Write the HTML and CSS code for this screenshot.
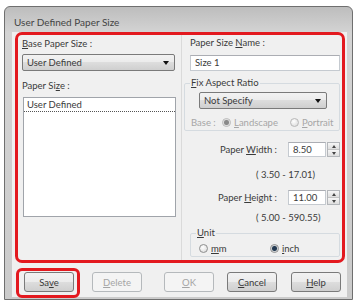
FILE: index.html
```html
<!DOCTYPE html>
<html>
  <head>
    <meta charset="utf-8">
    <link rel="stylesheet" href="styles.css">
  </head>
  <body>
    <div class="window">
      <div class="titlebar">User Defined Paper Size</div>
      <div class="client">
        <div class="panel">
          <div class="col-left">
            <div class="label base-label"><u>B</u>ase Paper Size :</div>
            <div class="combo combo-base"><span>User Defined</span><i class="arrow"></i></div>
            <div class="label size-label">Paper Si<u>z</u>e :</div>
            <div class="listbox">
              <div class="item">User Defined</div>
            </div>
          </div>
          <div class="col-right">
            <div class="label name-label">Paper Size <u>N</u>ame :</div>
            <div class="textbox">Size 1</div>
            <fieldset class="group aspect">
              <legend><u>F</u>ix Aspect Ratio</legend>
              <div class="combo combo-aspect"><span>Not Specify</span><i class="arrow"></i></div>
              <div class="radio-row base-row">
                <span class="base-text">Base :</span>
                <span class="radio checked disabled"></span>
                <span class="rtext landscape"><u>L</u>andscape</span>
                <span class="radio disabled"></span>
                <span class="rtext"><u>P</u>ortrait</span>
              </div>
            </fieldset>
            <div class="spin-row row-width">
              <span class="spin-label">Paper <u>W</u>idth :</span>
              <div class="numbox">8.50</div>
              <div class="spinner"><b class="up"></b><b class="down"></b></div>
            </div>
            <div class="range range-width">( 3.50 - 17.01)</div>
            <div class="spin-row row-height">
              <span class="spin-label">Paper <u>H</u>eight :</span>
              <div class="numbox">11.00</div>
              <div class="spinner"><b class="up"></b><b class="down"></b></div>
            </div>
            <div class="range range-height">( 5.00 - 590.55)</div>
            <fieldset class="group unit">
              <legend><u>U</u>nit</legend>
              <div class="radio-row unit-row">
                <span class="radio"></span>
                <span class="rtext mm"><u>m</u>m</span>
                <span class="radio checked"></span>
                <span class="rtext"><u>i</u>nch</span>
              </div>
            </fieldset>
          </div>
        </div>
        <div class="buttons">
          <div class="save-mark"><button class="btn">Sa<u>v</u>e</button></div>
          <button class="btn btn-delete" disabled><u>D</u>elete</button>
          <button class="btn btn-ok" disabled><u>O</u>K</button>
          <button class="btn btn-cancel"><u>C</u>ancel</button>
          <button class="btn btn-help"><u>H</u>elp</button>
        </div>
      </div>
    </div>
  </body>
</html>
```

FILE: styles.css
```css
body {
  margin: 0;
  background: #fff;
  font-family: Lato, "Liberation Sans", sans-serif;
  font-size: 9.5px;
  color: #3a3a3a;
}

u {
  text-decoration-thickness: 1px;
  text-underline-offset: 1px;
}

.window {
  box-sizing: border-box;
  width: 349px;
  height: 294px;
  margin: 6px 0 0 4px;
  padding: 0 5px 2px 7px;
  border: 1px solid #6f6f6f;
  border-radius: 6px 6px 0 0;
  background: linear-gradient(#bdbdbd, #d4d4d4 26px, #cbcbcb);
}

.titlebar {
  box-sizing: border-box;
  height: 25px;
  padding: 8px 0 0 2px;
  line-height: 14px;
  font-size: 10px;
  color: #444;
}

.client {
  height: 265px;
  background: #f0f0f0;
}

/* red annotation round the settings */
.panel {
  box-sizing: border-box;
  width: 330px;
  height: 231px;
  margin-left: 3px;
  border: 3px solid #e3191f;
  border-radius: 7px;
  display: grid;
  grid-template-columns: 164px 1fr;
}

.label {
  line-height: 12px;
}

.col-left {
  padding-left: 4px;
  border-right: 1px solid #dadada;
}

.base-label {
  margin-top: 3px;
}

.size-label {
  margin-top: 9px;
}

.combo {
  box-sizing: border-box;
  height: 17px;
  display: flex;
  align-items: center;
  padding: 0 5px 0 4px;
  border: 1px solid #7a7a7a;
  border-radius: 2px;
  background: linear-gradient(#f2f2f2, #ebebeb 50%, #dddddd 50%, #cfcfcf);
}

.combo-base {
  width: 153px;
  margin-top: 4px;
}

.arrow {
  margin-left: auto;
  border-top: 4px solid #111;
  border-left: 3px solid transparent;
  border-right: 3px solid transparent;
}

.listbox {
  box-sizing: border-box;
  width: 153px;
  height: 120px;
  margin: 5px 0 0 1px;
  border: 1px solid #a0a4aa;
  background: #fff;
}

.item {
  line-height: 12px;
  padding: 1px 3px 0;
  border-bottom: 1px dotted #555;
}

.col-right {
  padding: 0 2px 0 8px;
}

.name-label {
  margin-top: 2px;
}

.textbox {
  box-sizing: border-box;
  height: 16px;
  margin-top: 6px;
  padding: 0 4px;
  line-height: 14px;
  border: 1px solid #c5cad0;
  border-top-color: #abadb3;
  background: #fff;
}

.group {
  margin: 0;
  padding: 0;
  border: 1px solid #d5dbe0;
  border-radius: 2px;
}

.group legend {
  margin-left: 5px;
  padding: 0 1px;
  line-height: 12px;
}

.aspect {
  margin: 6px 0 0 -6px;
  padding-bottom: 2px;
}

.combo-aspect {
  width: 128px;
  margin: 3px 0 0 14px;
}

.radio-row {
  display: flex;
  align-items: center;
  height: 12px;
}

.base-row {
  margin-top: 7px;
  padding-left: 6px;
  color: #a6a6a6;
}

.base-text {
  width: 31px;
}

.radio {
  box-sizing: border-box;
  width: 9px;
  height: 9px;
  border: 1px solid #8e8f8f;
  border-radius: 50%;
  background: radial-gradient(circle at 40% 35%, #fff, #d6d6d6);
}

.radio.checked {
  background: radial-gradient(circle, #243a52 0 2px, #7e8a96 2.6px, #ececec 3.2px);
}

.radio.disabled {
  border-color: #b8b8b8;
}

.radio.checked.disabled {
  background: radial-gradient(circle, #8a8a8a 0 2px, #b0b0b0 2.6px, #f0f0f0 3.2px);
}

.rtext {
  margin-left: 3px;
}

.landscape {
  width: 56px;
}

.spin-row {
  display: flex;
  justify-content: flex-end;
  align-items: center;
  height: 15px;
}

.spin-label {
  margin-right: 11px;
}

.row-width {
  margin-top: 11px;
}

.row-height {
  margin-top: 9px;
}

.numbox {
  box-sizing: border-box;
  width: 38px;
  height: 15px;
  padding: 0 4px;
  line-height: 13px;
  border: 1px solid #c5cad0;
  border-top-color: #abadb3;
  background: #fff;
}

.spinner {
  box-sizing: border-box;
  width: 13px;
  height: 15px;
  margin-left: 1px;
  display: flex;
  flex-direction: column;
  border: 1px solid #b3b6ba;
}

.spinner b {
  flex: 1;
  display: flex;
  align-items: center;
  justify-content: center;
  background: linear-gradient(#f6f6f6, #dedede);
}

.spinner .up {
  border-bottom: 1px solid #c4c4c4;
}

.spinner .up::after,
.spinner .down::after {
  content: "";
  border-left: 2.5px solid transparent;
  border-right: 2.5px solid transparent;
}

.spinner .up::after {
  border-bottom: 3px solid #444;
}

.spinner .down::after {
  border-top: 3px solid #444;
}

.range {
  padding-left: 66px;
  line-height: 12px;
}

.range-width {
  margin-top: 12px;
}

.range-height {
  margin-top: 7px;
}

.unit {
  margin-top: 3px;
  padding-bottom: 2px;
}

.unit-row {
  margin-top: 3px;
  padding-left: 8px;
}

.mm {
  width: 59px;
}

.buttons {
  display: flex;
  align-items: flex-start;
}

.save-mark {
  margin: 5px 0 0 4px;
  padding: 1px 3px 3px 5px;
  border: 3px solid #e3191f;
  border-radius: 6px;
}

.btn {
  box-sizing: border-box;
  width: 50px;
  height: 20px;
  padding: 0;
  border: 1px solid #7a7a7a;
  border-radius: 3px;
  background: linear-gradient(#f2f2f2, #ebebeb 50%, #dddddd 50%, #cfcfcf);
  font: inherit;
  color: #3a3a3a;
}

.btn:disabled {
  border-color: #b5b9bc;
  background: #f4f4f4;
  color: #a4a4a4;
}

.btn-delete {
  margin: 9px 0 0 12px;
}

.btn-ok {
  margin: 9px 0 0 22px;
}

.btn-cancel {
  margin: 9px 0 0 13px;
}

.btn-help {
  margin: 9px 0 0 14px;
}
```
